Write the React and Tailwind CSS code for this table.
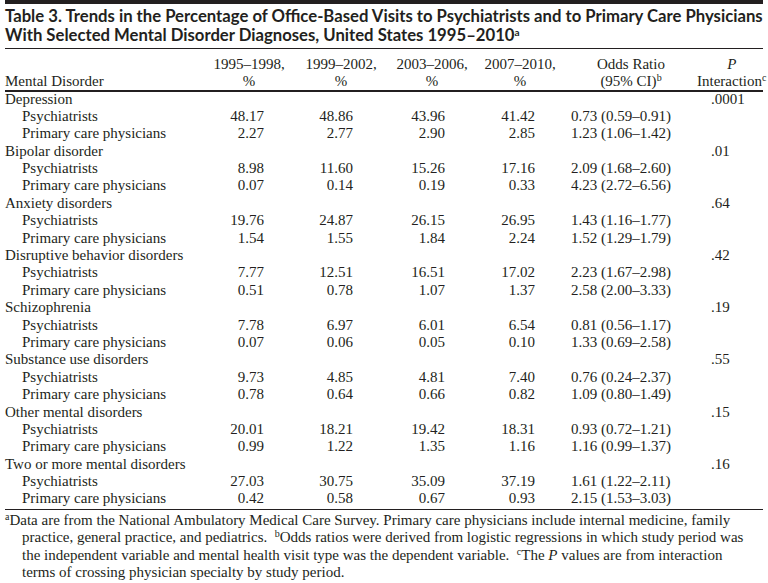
const GROUPS = [
  { name: 'Depression', p: '.0001', rows: [['48.17', '48.86', '43.96', '41.42', '0.73 (0.59–0.91)'], ['2.27', '2.77', '2.90', '2.85', '1.23 (1.06–1.42)']] },
  { name: 'Bipolar disorder', p: '.01', rows: [['8.98', '11.60', '15.26', '17.16', '2.09 (1.68–2.60)'], ['0.07', '0.14', '0.19', '0.33', '4.23 (2.72–6.56)']] },
  { name: 'Anxiety disorders', p: '.64', rows: [['19.76', '24.87', '26.15', '26.95', '1.43 (1.16–1.77)'], ['1.54', '1.55', '1.84', '2.24', '1.52 (1.29–1.79)']] },
  { name: 'Disruptive behavior disorders', p: '.42', rows: [['7.77', '12.51', '16.51', '17.02', '2.23 (1.67–2.98)'], ['0.51', '0.78', '1.07', '1.37', '2.58 (2.00–3.33)']] },
  { name: 'Schizophrenia', p: '.19', rows: [['7.78', '6.97', '6.01', '6.54', '0.81 (0.56–1.17)'], ['0.07', '0.06', '0.05', '0.10', '1.33 (0.69–2.58)']] },
  { name: 'Substance use disorders', p: '.55', rows: [['9.73', '4.85', '4.81', '7.40', '0.76 (0.24–2.37)'], ['0.78', '0.64', '0.66', '0.82', '1.09 (0.80–1.49)']] },
  { name: 'Other mental disorders', p: '.15', rows: [['20.01', '18.21', '19.42', '18.31', '0.93 (0.72–1.21)'], ['0.99', '1.22', '1.35', '1.16', '1.16 (0.99–1.37)']] },
  { name: 'Two or more mental disorders', p: '.16', rows: [['27.03', '30.75', '35.09', '37.19', '1.61 (1.22–2.11)'], ['0.42', '0.58', '0.67', '0.93', '2.15 (1.53–3.03)']] },
];

const LABELS = ['Psychiatrists', 'Primary care physicians'];
const ROW = 'grid grid-cols-[217px_42px_89px_92px_90px_176px_1fr] h-[17.4px] leading-[17.4px] whitespace-nowrap';

// small raised letter that doesn't disturb the line box
function Sup({ children }) {
  return <span className="relative -top-[5px] text-[10px] leading-none">{children}</span>;
}

export default function App() {
  return (
    <div className="w-[768px] h-[583px] bg-white text-[#231f20] px-[5px] overflow-hidden font-['Liberation_Serif',serif] text-[15px]">
      <div className="h-[4px] bg-[#231f20]" />
      <div className="pt-[3px] pb-[3px] font-['Lato',sans-serif] font-bold text-[16.7px] leading-[19px] whitespace-nowrap">
        <div>Table 3. Trends in the Percentage of Office-Based Visits to Psychiatrists and to Primary Care Physicians</div>
        <div>With Selected Mental Disorder Diagnoses, United States 1995–2010<span className="relative -top-[5px] text-[10px] leading-none">a</span></div>
      </div>
      <div className="h-px bg-[#231f20]" />

      <div className="grid grid-cols-[200px_88px_96px_86px_90px_132px_1fr] leading-[17px] pt-[7px] whitespace-nowrap">
        <div className="flex items-end">Mental Disorder</div>
        <div className="text-center">1995–1998,<br />%</div>
        <div className="text-center">1999–2002,<br />%</div>
        <div className="text-center">2003–2006,<br />%</div>
        <div className="text-center">2007–2010,<br />%</div>
        <div className="text-center">Odds Ratio<br />(95% CI)<Sup>b</Sup></div>
        <div className="flex justify-end">
          <div className="text-center"><span className="italic">P</span><br />Interaction<Sup>c</Sup></div>
        </div>
      </div>
      <div className="h-[1.5px] bg-[#231f20]" />

      <div className="-mt-px">
        {GROUPS.map(g => (
          <div key={g.name}>
            <div className={ROW}>
              <div className="col-span-6">{g.name}</div>
              <div>{g.p}</div>
            </div>
            {g.rows.map((r, i) => (
              <div key={i} className={ROW}>
                <div className="pl-[17px]">{LABELS[i]}</div>
                <div className="text-right">{r[0]}</div>
                <div className="text-right">{r[1]}</div>
                <div className="text-right">{r[2]}</div>
                <div className="text-right">{r[3]}</div>
                <div className="pl-[36px]">{r[4]}</div>
                <div />
              </div>
            ))}
          </div>
        ))}
      </div>
      <div className="h-px bg-[#231f20] mt-[1px]" />

      <div className="leading-[17.4px] pt-[2px] pb-px whitespace-nowrap">
        <div><Sup>a</Sup>Data are from the National Ambulatory Medical Care Survey. Primary care physicians include internal medicine, family</div>
        <div className="pl-[17px]">practice, general practice, and pediatrics.&nbsp; <Sup>b</Sup>Odds ratios were derived from logistic regressions in which study period was</div>
        <div className="pl-[17px]">the independent variable and mental health visit type was the dependent variable.&nbsp; <Sup>c</Sup>The <span className="italic">P</span> values are from interaction</div>
        <div className="pl-[17px]">terms of crossing physician specialty by study period.</div>
      </div>
      <div className="h-px bg-[#231f20]" />
    </div>
  );
}
